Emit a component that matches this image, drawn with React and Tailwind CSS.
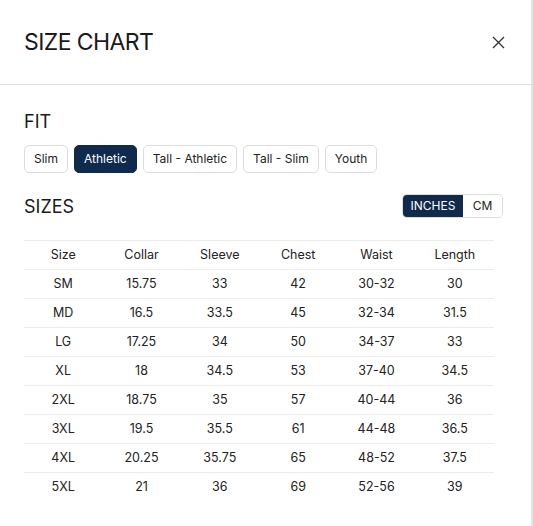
import { useState } from "react";

const FITS = ["Slim", "Athletic", "Tall - Athletic", "Tall - Slim", "Youth"];

const COLUMNS = ["Size", "Collar", "Sleeve", "Chest", "Waist", "Length"];

const ROWS = [
  ["SM", "15.75", "33", "42", "30-32", "30"],
  ["MD", "16.5", "33.5", "45", "32-34", "31.5"],
  ["LG", "17.25", "34", "50", "34-37", "33"],
  ["XL", "18", "34.5", "53", "37-40", "34.5"],
  ["2XL", "18.75", "35", "57", "40-44", "36"],
  ["3XL", "19.5", "35.5", "61", "44-48", "36.5"],
  ["4XL", "20.25", "35.75", "65", "48-52", "37.5"],
  ["5XL", "21", "36", "69", "52-56", "39"],
];

export default function App() {
  const [fit, setFit] = useState("Athletic");
  const [unit, setUnit] = useState("INCHES");

  return (
    <div
      className="h-[526px] w-[533px] bg-white text-[#1a1a1a] border-r-2 border-[#e4e4e4] overflow-hidden"
      style={{ fontFamily: "Inter, 'Noto Sans', sans-serif" }}
    >
      {/* Header */}
      <div className="h-[85px] flex items-center justify-between pl-6 pr-[26px] border-b border-[#dedede]">
        <h1 className="text-[23px] font-normal tracking-tight leading-none">SIZE CHART</h1>
        <button className="text-[#333]">
          <svg width="13" height="13" viewBox="0 0 13 13" fill="none" stroke="currentColor" strokeWidth="1.3">
            <path d="M1 1L12 12M12 1L1 12" />
          </svg>
        </button>
      </div>

      <div className="px-6 pt-[23px]">
        {/* Fit */}
        <h2 className="text-[18px] leading-[28px] font-normal">FIT</h2>
        <div className="flex gap-[6px] mt-[9px]">
          {FITS.map((f) => (
            <button
              key={f}
              onClick={() => setFit(f)}
              className={[
                "h-[28px] px-[9px] rounded-[5px] border text-[12px]",
                fit === f
                  ? "bg-[#0f2a4d] border-[#0f2a4d] text-white"
                  : "bg-white border-[#dcdcdc] text-[#222]",
              ].join(" ")}
            >
              {f}
            </button>
          ))}
        </div>

        {/* Sizes */}
        <div className="flex items-center justify-between mt-[21px] pr-[4px]">
          <h2 className="text-[18px] leading-[23px] font-normal">SIZES</h2>
          <div className="flex h-[24px] rounded-[5px] border border-[#dcdcdc] overflow-hidden text-[12px]">
            {["INCHES", "CM"].map((u) => (
              <button
                key={u}
                onClick={() => setUnit(u)}
                className={[
                  u === "INCHES" ? "w-[60px]" : "w-[39px]",
                  unit === u ? "bg-[#0f2a4d] text-white" : "bg-white text-[#222]",
                ].join(" ")}
              >
                {u}
              </button>
            ))}
          </div>
        </div>

        {/* Table */}
        <table className="w-[470px] mt-[22px] table-fixed border-collapse text-[12.5px] text-[#222]">
          <thead>
            <tr className="h-[29px] border-t border-b border-[#ececec]">
              {COLUMNS.map((c) => (
                <th key={c} className="font-normal text-center">{c}</th>
              ))}
            </tr>
          </thead>
          <tbody>
            {ROWS.map((r, i) => (
              <tr key={r[0]} className={["h-[29px]", i < ROWS.length - 1 ? "border-b border-[#ececec]" : ""].join(" ")}>
                {r.map((v, j) => (
                  <td key={j} className="text-center">{v}</td>
                ))}
              </tr>
            ))}
          </tbody>
        </table>
      </div>
    </div>
  );
}
